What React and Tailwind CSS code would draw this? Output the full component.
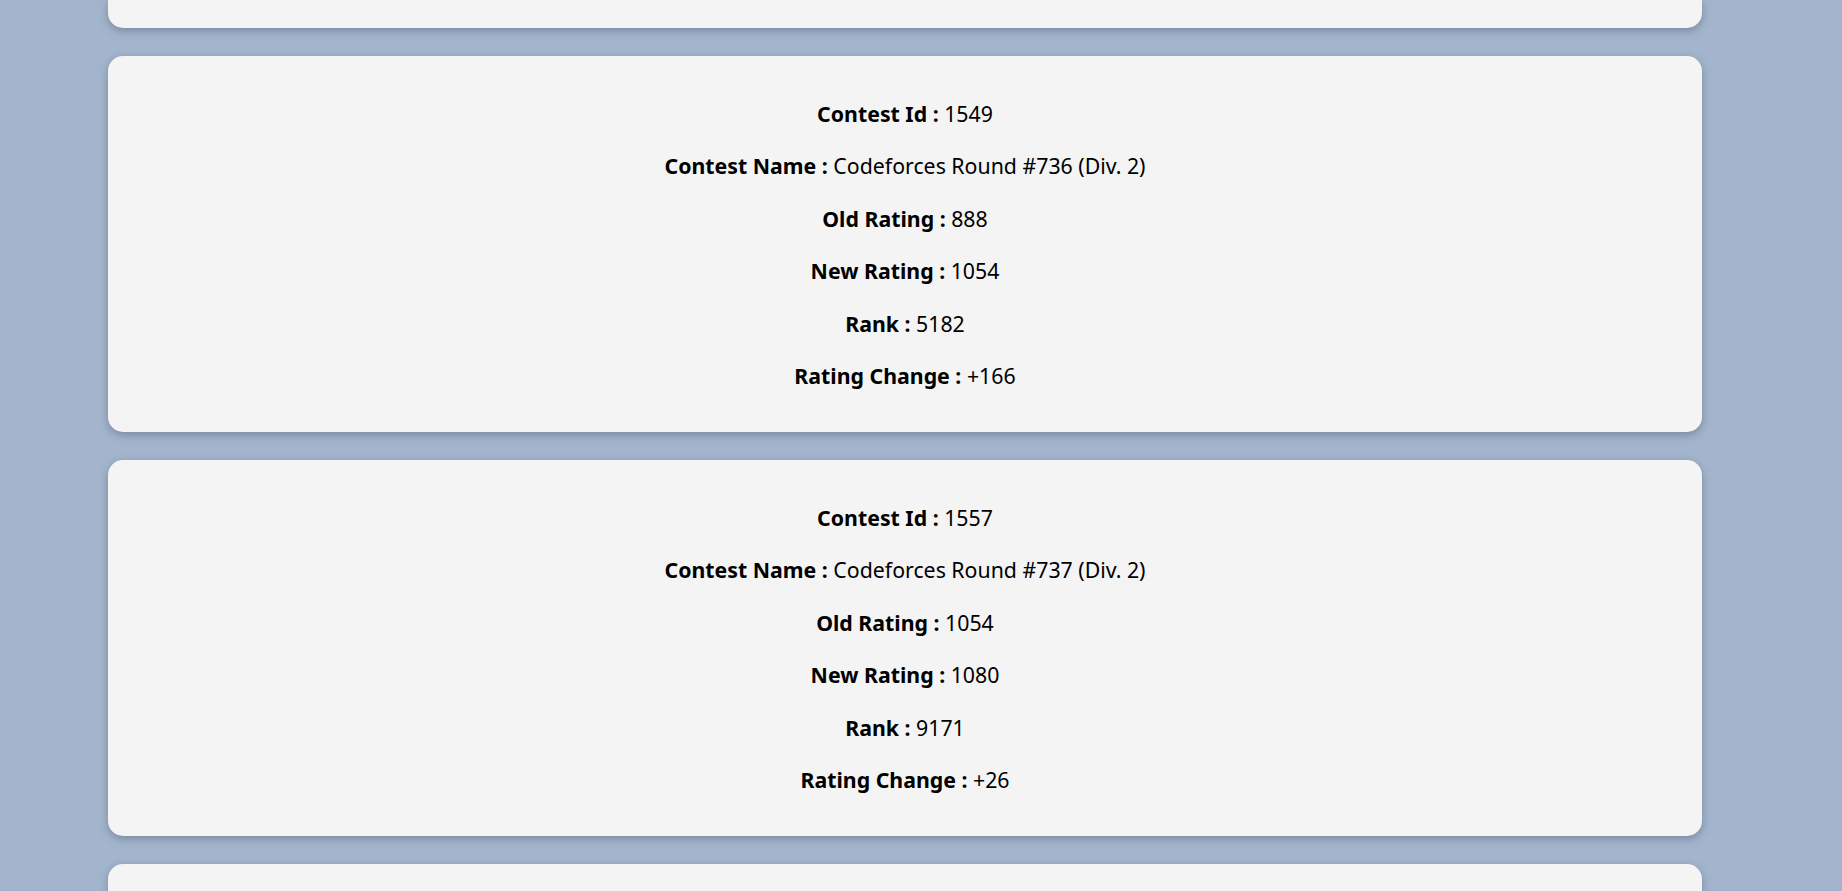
import React from 'react';

const contests = [
  { id: 1549, name: 'Codeforces Round #736 (Div. 2)', oldRating: 888, newRating: 1054, rank: 5182, change: 166 },
  { id: 1557, name: 'Codeforces Round #737 (Div. 2)', oldRating: 1054, newRating: 1080, rank: 9171, change: 26 },
];

const cardClass =
  'bg-[#f4f4f4] rounded-[15px] shadow-[0_3px_8px_rgba(40,55,80,0.35)]';

const Row = ({ label, value }) => (
  <p className="leading-[30px]">
    <span className="font-bold">{label} : </span>
    {value}
  </p>
);

const ContestCard = ({ contest }) => {
  const sign = contest.change >= 0 ? '+' : '';
  return (
    <div className={`${cardClass} pt-[43px] pb-[41px] flex flex-col items-center gap-[22.4px] text-black`}>
      <Row label="Contest Id" value={contest.id} />
      <Row label="Contest Name" value={contest.name} />
      <Row label="Old Rating" value={contest.oldRating} />
      <Row label="New Rating" value={contest.newRating} />
      <Row label="Rank" value={contest.rank} />
      <Row label="Rating Change" value={`${sign}${contest.change}`} />
    </div>
  );
};

export default function App() {
  return (
    <div className="h-screen bg-[#a3b5cc] overflow-hidden font-['Noto_Sans',sans-serif] text-[21.3px]">
      <div className="ml-[108px] mr-[140px] flex flex-col gap-[28px]">
        {/* previous card, scrolled mostly out of view */}
        <div className={`${cardClass} h-[28px] rounded-t-none`} />
        {contests.map((c) => (
          <ContestCard key={c.id} contest={c} />
        ))}
        {/* next card, only its top edge is in view */}
        <div className={`${cardClass} h-[40px] rounded-b-none`} />
      </div>
    </div>
  );
}
